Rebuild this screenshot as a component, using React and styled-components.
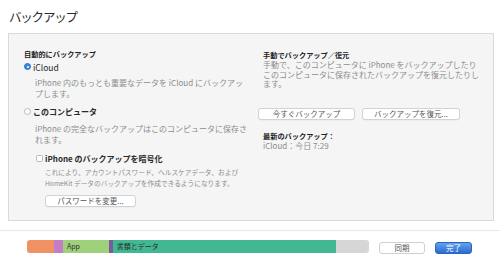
import React from "react";
import styled, { createGlobalStyle } from "styled-components";

const GlobalStyle = createGlobalStyle`
  html, body {
    margin: 0;
    padding: 0;
    background: #fff;
  }
  body {
    width: 500px;
    height: 262px;
    overflow: hidden;
    font-family: "Noto Sans CJK JP", "Liberation Sans", sans-serif;
    color: #333;
  }
`;

const Page = styled.div`
  width: 500px;
  height: 262px;
  display: flex;
  flex-direction: column;
`;

const Title = styled.h1`
  margin: 0;
  height: 33px;
  padding-left: 9px;
  font-size: 12.5px;
  font-weight: 400;
  line-height: 34px;
  letter-spacing: -1.2px;
  color: #2a2a2a;
`;

const Panel = styled.section`
  margin: 0 6px 0 8px;
  height: 188px;
  box-sizing: border-box;
  background: #f5f5f5;
  border: 1px solid #dadada;
  display: grid;
  grid-template-columns: 239px 1fr;
  padding-left: 15px;
`;

const Column = styled.div`
  display: flex;
  flex-direction: column;
  align-items: flex-start;
  padding-top: ${(p) => p.$top}px;
`;

const Heading = styled.div`
  font-size: 7.2px;
  font-weight: 700;
  line-height: ${(p) => p.$lh || 12}px;
  margin-top: ${(p) => p.$mt || 0}px;
  color: #222;
  white-space: nowrap;
`;

const OptionRow = styled.label`
  display: flex;
  align-items: center;
  gap: 2px;
  height: 13px;
  margin-top: ${(p) => p.$mt || 0}px;
  padding-left: ${(p) => p.$pl || 0}px;
  font-size: ${(p) => (p.$bold ? 8 : 8.5)}px;
  font-weight: ${(p) => (p.$bold ? 700 : 400)};
  color: #2a2a2a;
  white-space: nowrap;
`;

const Radio = styled.span`
  box-sizing: border-box;
  width: 7px;
  height: 7px;
  border-radius: 50%;
  position: relative;
  background: ${(p) => (p.$checked ? "#3b86dc" : "#fff")};
  border: 1px solid ${(p) => (p.$checked ? "#2f74c8" : "#b9b9b9")};
  &::after {
    content: "";
    display: ${(p) => (p.$checked ? "block" : "none")};
    position: absolute;
    left: 1.5px;
    top: 1.5px;
    width: 2px;
    height: 2px;
    border-radius: 50%;
    background: #fff;
  }
`;

const Checkbox = styled.span`
  box-sizing: border-box;
  width: 7px;
  height: 7px;
  border-radius: 1.5px;
  background: #fff;
  border: 1px solid #b9b9b9;
`;

const Desc = styled.div`
  display: flex;
  flex-direction: column;
  margin-top: ${(p) => p.$mt || 0}px;
  padding-left: ${(p) => p.$pl || 0}px;
  font-size: ${(p) => p.$size || 8}px;
  line-height: ${(p) => p.$lh || 11}px;
  color: #8d8d8d;
  white-space: nowrap;
`;

const Line = styled.span`
  display: block;
`;

const Button = styled.button`
  box-sizing: border-box;
  height: 12px;
  width: ${(p) => p.$w}px;
  margin: 0;
  padding: 0;
  background: #fff;
  border: 1px solid #d2d2d2;
  border-radius: 3px;
  box-shadow: 0 0.5px 0 rgba(0, 0, 0, 0.06);
  font-family: inherit;
  font-size: 7.5px;
  line-height: 10px;
  color: #555;
  white-space: nowrap;
`;

const ButtonRow = styled.div`
  display: flex;
  gap: 7px;
  margin-top: ${(p) => p.$mt || 0}px;
  margin-left: ${(p) => p.$ml || 0}px;
  padding-left: ${(p) => p.$pl || 0}px;
`;

const Footer = styled.footer`
  margin-top: 9px;
  flex: 1;
  border-top: 1px solid #e8e8e8;
  display: flex;
  align-items: flex-start;
  padding: 9px 0 0 27px;
  gap: 10px;
`;

const Bar = styled.div`
  display: flex;
  width: 342px;
  height: 13px;
  border-radius: 3px;
  overflow: hidden;
`;

const Segment = styled.div`
  width: ${(p) => p.$w}px;
  background: ${(p) => p.$color};
  box-sizing: border-box;
  padding-left: 4px;
  font-size: 7px;
  line-height: 13px;
  color: #2c2c2c;
  white-space: nowrap;
  overflow: hidden;
`;

const FooterButton = styled.button`
  box-sizing: border-box;
  width: ${(p) => p.$w}px;
  height: 12px;
  margin-top: 2px;
  padding: 0;
  border-radius: 3px;
  font-family: inherit;
  font-size: 7.5px;
  line-height: 10px;
  background: ${(p) => (p.$primary ? "linear-gradient(#64a3ea, #2a6bd0)" : "#fff")};
  border: 1px solid ${(p) => (p.$primary ? "#2863bd" : "#d0d0d0")};
  color: ${(p) => (p.$primary ? "#fff" : "#555")};
`;

const segments = [
  { w: 27, color: "#ef9163" },
  { w: 9, color: "#c47ec6" },
  { w: 46, color: "#9fd07c", label: "App" },
  { w: 3, color: "#7b5aa3" },
  { w: 224, color: "#41b891", label: "書類とデータ" },
  { w: 33, color: "#d6d6d6" },
];

export default function App() {
  return (
    <>
      <GlobalStyle />
      <Page>
        <Title>バックアップ</Title>
        <Panel>
          <Column $top={14}>
            <Heading>自動的にバックアップ</Heading>
            <OptionRow>
              <Radio $checked />
              iCloud
            </OptionRow>
            <Desc $mt={4} $pl={11}>
              <Line>iPhone 内のもっとも重要なデータを iCloud にバックアッ</Line>
              <Line>プします。</Line>
            </Desc>
            <OptionRow $mt={6} $bold>
              <Radio />
              このコンピュータ
            </OptionRow>
            <Desc $mt={5} $pl={11}>
              <Line>iPhone の完全なバックアップはこのコンピュータに保存さ</Line>
              <Line>れます。</Line>
            </Desc>
            <OptionRow $mt={6.5} $pl={12} $bold>
              <Checkbox />
              iPhone のバックアップを暗号化
            </OptionRow>
            <Desc $mt={2} $pl={21} $size={6.7} $lh={11}>
              <Line>これにより、アカウントパスワード、ヘルスケアデータ、および</Line>
              <Line>HomeKit データのバックアップを作成できるようになります。</Line>
            </Desc>
            <ButtonRow $mt={6.5} $pl={21}>
              <Button $w={91}>パスワードを変更...</Button>
            </ButtonRow>
          </Column>
          <Column $top={16}>
            <Heading $lh={10}>手動でバックアップ／復元</Heading>
            <Desc $lh={9.7}>
              <Line>手動で、このコンピュータに iPhone をバックアップしたり</Line>
              <Line>このコンピュータに保存されたバックアップを復元したりし</Line>
              <Line>ます。</Line>
            </Desc>
            <ButtonRow $mt={19} $ml={-5}>
              <Button $w={97}>今すぐバックアップ</Button>
              <Button $w={98}>バックアップを復元...</Button>
            </ButtonRow>
            <Heading $lh={10} $mt={11}>
              最新のバックアップ：
            </Heading>
            <Desc $lh={10}>
              <Line>iCloud：今日 7:29</Line>
            </Desc>
          </Column>
        </Panel>
        <Footer>
          <Bar>
            {segments.map((s, i) => (
              <Segment key={i} $w={s.w} $color={s.color}>
                {s.label}
              </Segment>
            ))}
          </Bar>
          <FooterButton $w={46}>同期</FooterButton>
          <FooterButton $w={37} $primary>
            完了
          </FooterButton>
        </Footer>
      </Page>
    </>
  );
}
